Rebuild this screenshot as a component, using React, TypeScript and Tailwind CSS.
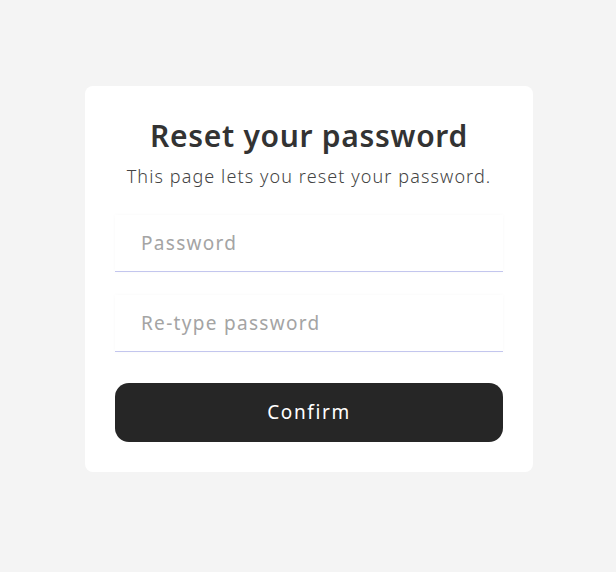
export default function App() {
  return (
    <div
      className="min-h-screen w-full bg-[#f4f4f4] flex justify-center pt-[86px] pl-[2px]"
      style={{ fontFamily: '"Noto Sans", "Open Sans", sans-serif' }}
    >
      <form className="w-[448px] h-[386px] bg-white rounded-lg px-[30px] pt-[30px] flex flex-col">
        <h1 className="text-center text-[30px] leading-[40px] font-semibold tracking-[0.7px] text-[#333]">
          Reset your password
        </h1>
        <p className="text-center text-[18px] leading-[24px] font-light tracking-[1.1px] text-[#444] mt-[8px]">
          This page lets you reset your password.
        </p>

        {/* champs */}
        <div className="mt-[27px] flex flex-col gap-[23px]">
          <input
            type="password"
            placeholder="Password"
            className="h-[57px] w-full bg-white border-b border-[#c3c6ee] shadow-[0_0_4px_rgba(0,0,0,0.03)] pl-[26px] text-[19px] tracking-[1.3px] text-[#333] placeholder:text-[#a4a4a4] outline-none"
          />
          <input
            type="password"
            placeholder="Re-type password"
            className="h-[57px] w-full bg-white border-b border-[#c3c6ee] shadow-[0_0_4px_rgba(0,0,0,0.03)] pl-[26px] text-[19px] tracking-[1.3px] text-[#333] placeholder:text-[#a4a4a4] outline-none"
          />
        </div>

        <button
          type="button"
          className="mt-[31px] h-[59px] w-full rounded-[14px] bg-[#262626] text-white text-[19px] font-normal tracking-[1.6px]"
        >
          Confirm
        </button>
      </form>
    </div>
  );
}
